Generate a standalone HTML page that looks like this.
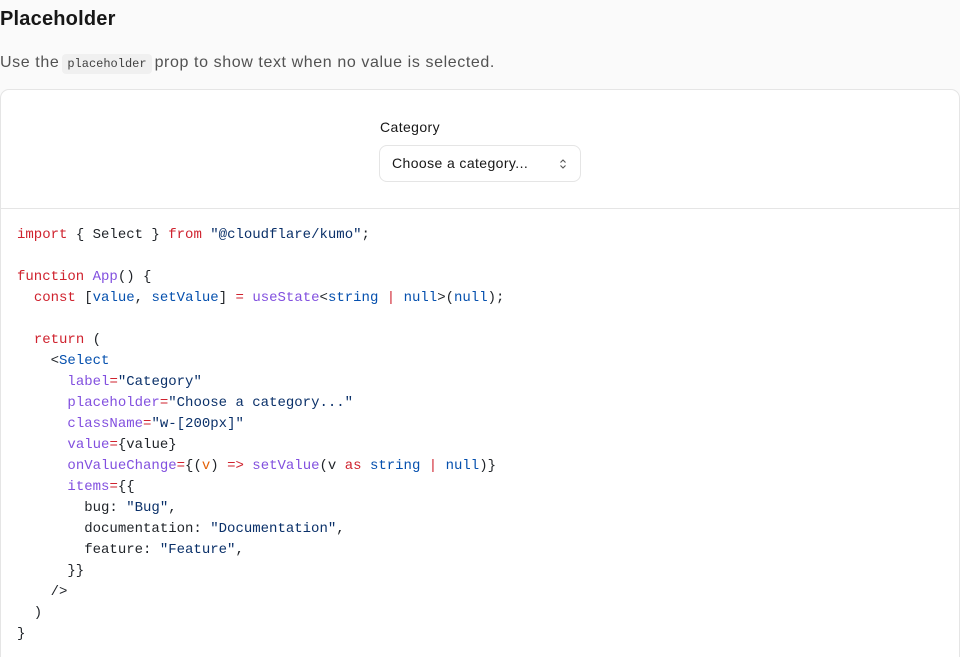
<!DOCTYPE html>
<html><head><meta charset="utf-8"><style>
*{box-sizing:border-box;margin:0;padding:0}
html,body{width:960px;height:657px;overflow:hidden}
body{background:#fafafa;font-family:"Liberation Sans",sans-serif;color:#171717;position:relative}
h2{position:absolute;left:0;top:8px;font-size:20px;font-weight:700;letter-spacing:0.2px}
p.d{position:absolute;left:0;top:54px;font-size:16px;color:#525252;letter-spacing:0.6px}
p.d code{font-family:"Liberation Mono",monospace;font-size:12px;background:#f0f0f0;padding:3px 5px;border-radius:4px;color:#404040;margin:0 3px;letter-spacing:0}
.card{position:absolute;left:0;top:89px;width:960px;height:580px;border:1px solid #e5e5e5;border-radius:9px;background:#fff;overflow:hidden}
.demo{height:119px;border-bottom:1px solid #e5e5e5;position:relative}
.lab{position:absolute;left:379px;top:29px;font-size:14px;color:#171717;letter-spacing:0.4px}
.sel{position:absolute;left:378px;top:55px;width:202px;height:37px;border:1px solid #e5e5e5;border-radius:8px;font-size:14px;padding:9px 12px;color:#171717;letter-spacing:0.4px}
.sel svg{position:absolute;right:13px;top:12px}
pre{font-family:"Liberation Mono",monospace;font-size:14px;line-height:21px;padding:16px 16px;color:#1f2328}
.k{color:#cf222e}.f{color:#8250df}.c{color:#0550ae}.s{color:#0a3069}.o{color:#e36209}
</style></head><body>
<h2>Placeholder</h2>
<p class="d">Use the<code>placeholder</code>prop to show text when no value is selected.</p>
<div class="card">
<div class="demo"><div class="lab">Category</div><div class="sel">Choose a category...<svg width="8" height="12" viewBox="0 0 8 12"><path d="M1.5 4.5L4 2l2.5 2.5M1.5 7.5L4 10l2.5-2.5" fill="none" stroke="#555" stroke-width="1.1"/></svg></div></div>
<pre><span class="k">import</span> { Select } <span class="k">from</span> <span class="s">"@cloudflare/kumo"</span>;

<span class="k">function</span> <span class="f">App</span>() {
  <span class="k">const</span> [<span class="c">value</span>, <span class="c">setValue</span>] <span class="k">=</span> <span class="f">useState</span>&lt;<span class="c">string</span> <span class="k">|</span> <span class="c">null</span>&gt;(<span class="c">null</span>);

  <span class="k">return</span> (
    &lt;<span class="c">Select</span>
      <span class="f">label</span><span class="k">=</span><span class="s">"Category"</span>
      <span class="f">placeholder</span><span class="k">=</span><span class="s">"Choose a category..."</span>
      <span class="f">className</span><span class="k">=</span><span class="s">"w-[200px]"</span>
      <span class="f">value</span><span class="k">=</span>{value}
      <span class="f">onValueChange</span><span class="k">=</span>{(<span class="o">v</span>) <span class="k">=&gt;</span> <span class="f">setValue</span>(v <span class="k">as</span> <span class="c">string</span> <span class="k">|</span> <span class="c">null</span>)}
      <span class="f">items</span><span class="k">=</span>{{
        bug: <span class="s">"Bug"</span>,
        documentation: <span class="s">"Documentation"</span>,
        feature: <span class="s">"Feature"</span>,
      }}
    /&gt;
  )
}</pre>
</div>
</body></html>
